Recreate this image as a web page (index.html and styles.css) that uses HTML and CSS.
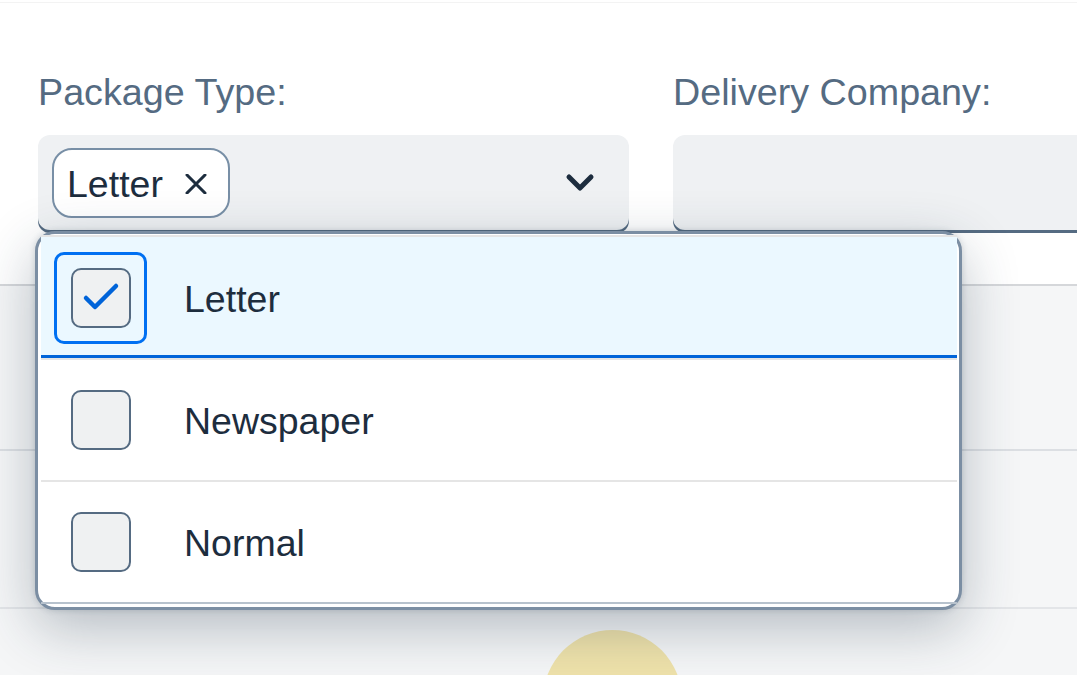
FILE: index.html
```html
<!DOCTYPE html>
<html lang="en">
<head>
<meta charset="utf-8">
<title>Package filter</title>
<link rel="stylesheet" href="styles.css">
</head>
<body>
<div class="page">
  <div class="top-rule"></div>
  <div class="filterbar">
    <div class="filter filter-package">
      <div class="label">Package Type:</div>
      <div class="field">
        <span class="token">
          <span class="token-text">Letter</span>
          <svg class="token-x" width="22" height="20" viewBox="0 0 22 20"><path d="M2 1 L20 19 M20 1 L2 19" stroke="#1d2d3e" stroke-width="3" fill="none" stroke-linecap="round"/></svg>
        </span>
        <svg class="chevron" width="30" height="20" viewBox="0 0 30 20"><path d="M4 4 L15 15 L26 4" stroke="#1d2d3e" stroke-width="5" fill="none" stroke-linecap="round" stroke-linejoin="round"/></svg>
        <div class="popup">
          <ul class="list">
            <li class="item selected">
              <span class="cb-wrap focused"><span class="cb"><svg width="56" height="56" viewBox="0 0 56 56"><path d="M13 28 L22 37 L43 16" stroke="#0064d9" stroke-width="4.5" fill="none" stroke-linecap="round" stroke-linejoin="round"/></svg></span></span>
              <span class="item-text">Letter</span>
            </li>
            <li class="item">
              <span class="cb-wrap"><span class="cb"></span></span>
              <span class="item-text">Newspaper</span>
            </li>
            <li class="item last">
              <span class="cb-wrap"><span class="cb"></span></span>
              <span class="item-text">Normal</span>
            </li>
          </ul>
        </div>
      </div>
    </div>
    <div class="filter filter-company">
      <div class="label">Delivery Company:</div>
      <div class="field"></div>
    </div>
  </div>
  <div class="table">
    <div class="row row1"></div>
    <div class="row row2"></div>
    <div class="row row3"><span class="avatar"></span></div>
  </div>
</div>
</body>
</html>
```

FILE: styles.css
```css
html, body {
  margin: 0;
  padding: 0;
  background: #ffffff;
}
body {
  font-family: "Liberation Sans", Arial, sans-serif;
  color: #1d2d3e;
}
.page {
  width: 1077px;
  height: 675px;
  overflow: hidden;
  position: relative;
}
.top-rule {
  height: 2px;
  border-bottom: 1px solid #f3f3f3;
}
.filterbar {
  display: flex;
  gap: 44px;
  padding: 68px 0 0 38px;
}
.filter {
  display: flex;
  flex-direction: column;
  gap: 22px;
  flex: none;
}
.filter-package { width: 591px; }
.filter-company { width: 600px; }
.label {
  font-size: 37.7px;
  line-height: 42px;
  color: #556b82;
  white-space: nowrap;
}
.field {
  position: relative;
  height: 98px;
  box-sizing: border-box;
  background: #eff1f3;
  border-radius: 12px;
  box-shadow: inset 0 -3px 0 #556b82;
  display: flex;
  align-items: center;
  padding: 0 35px 2px 14px;
}
.token {
  display: flex;
  align-items: center;
  height: 70px;
  box-sizing: border-box;
  border: 2px solid #788fa6;
  border-radius: 20px;
  background: #ffffff;
  padding: 0 21px 0 13px;
}
.token-text {
  font-size: 37.5px;
  line-height: 42px;
  color: #1d2d3e;
  margin-top: 2px;
}
.token-x {
  margin-left: 22px;
  margin-top: 2px;
}
.chevron {
  margin-left: auto;
  margin-right: -1px;
}
.popup {
  position: absolute;
  left: -3px;
  top: 96px;
  width: 927px;
  box-sizing: border-box;
  background: #ffffff;
  border: 3px solid #7b8ea3;
  border-radius: 20px;
  padding: 1px 2px 3px 3px;
  z-index: 10;
  box-shadow: 0 18px 55px rgba(34, 53, 72, 0.3), 0 0 6px rgba(34, 53, 72, 0.18);
}
.list {
  list-style: none;
  margin: 0;
  padding: 0;
  border-top: 2px solid #e5e5e5;
}
.item {
  display: flex;
  align-items: center;
  height: 120px;
  border-bottom: 2px solid #e5e5e5;
  padding-left: 13px;
}
.item.selected {
  height: 121px;
  background: #ebf8ff;
  box-shadow: inset 0 -3px 0 #0064d9;
}
.item.last {
  border-bottom-color: #b7c2cd;
}
.cb-wrap {
  width: 93px;
  height: 92px;
  box-sizing: border-box;
  border: 3px solid transparent;
  border-radius: 10px;
  display: flex;
  align-items: center;
  justify-content: center;
  flex: none;
}
.cb-wrap.focused {
  border-color: #0070f2;
}
.cb {
  width: 60px;
  height: 60px;
  box-sizing: border-box;
  border: 2px solid #556b82;
  border-radius: 10px;
  background: #eff1f2;
  display: block;
}
.cb svg { display: block; }
.item-text {
  margin-left: 37px;
  font-size: 37.5px;
  line-height: 42px;
  color: #1d2d3e;
  margin-top: 2px;
}
.table {
  margin-top: 51px;
  border-top: 2px solid #d5d7da;
  background: #f5f6f7;
}
.row1 {
  height: 163px;
  border-bottom: 2px solid #dcdfe3;
}
.row2 {
  height: 156px;
  border-bottom: 2px solid #e3e5e8;
}
.row3 {
  height: 200px;
  padding: 21px 0 0 543px;
  box-sizing: border-box;
}
.avatar {
  display: block;
  width: 139px;
  height: 139px;
  border-radius: 50%;
  background: #efe2aa;
}
```
